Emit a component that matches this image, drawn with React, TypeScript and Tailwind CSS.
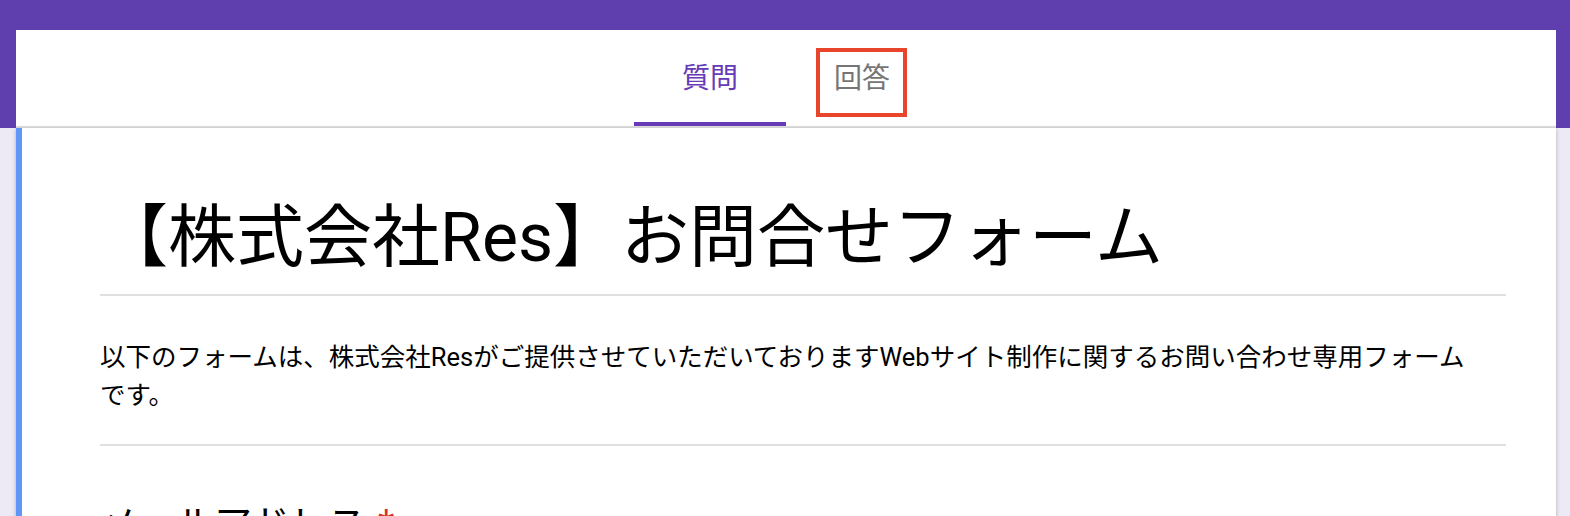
export default function App() {
  return (
    <div className="h-[516px] overflow-hidden bg-[#ede9f5] font-['Roboto','Noto_Sans_CJK_JP',sans-serif]">
      <div className="bg-[#5f3fae] pt-[30px] pl-[16px] pr-[14px]">
        <div className="bg-white h-[98px] border-b-2 border-[#e0e0e0] flex justify-center items-end">
          <div className="flex">
            <div className="w-[152px] h-[96px] flex items-center justify-center pt-[6px] border-b-4 border-[#673ab7] text-[28px] text-[#673ab7]">
              質問
            </div>
            <div className="relative w-[152px] h-[96px] flex items-center justify-center pt-[6px] border-b-4 border-transparent text-[28px] text-[#757575]">
              回答
              <div className="absolute left-[30px] top-[18px] w-[91px] h-[69px] border-4 border-[#e8452c]" />
            </div>
          </div>
        </div>
      </div>
      <div className="ml-[16px] mr-[14px] bg-white border-l-[6px] border-[#6096f7] shadow-[0_1px_4px_rgba(0,0,0,0.25)] pl-[78px] pr-[50px]">
        <div className="pt-[70px] text-[68px] leading-[80px] text-black whitespace-nowrap">
          【株式会社Res】お問合せフォーム
        </div>
        <div className="mt-[16px] h-[2px] bg-[#e0e0e0]" />
        <div className="mt-[42px] text-[25.5px] leading-[38px] text-black">
          以下のフォームは、株式会社Resがご提供させていただいておりますWebサイト制作に関するお問い合わせ専用フォーム
          <br />
          です。
        </div>
        <div className="mt-[30px] h-[2px] bg-[#e0e0e0]" />
        <div className="mt-[54px] text-[38px] leading-[48px] text-black pb-[40px]">
          メールアドレス<span className="text-[#d93025] ml-[12px]">*</span>
        </div>
      </div>
    </div>
  );
}
